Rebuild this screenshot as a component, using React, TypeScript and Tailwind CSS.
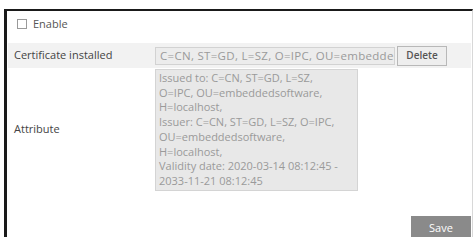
export default function App() {
  const attr = [
    "Issued to: C=CN, ST=GD, L=SZ,",
    "O=IPC, OU=embeddedsoftware,",
    "H=localhost,",
    "Issuer: C=CN, ST=GD, L=SZ, O=IPC,",
    "OU=embeddedsoftware,",
    "H=localhost,",
    "Validity date: 2020-03-14 08:12:45 -",
    "2033-11-21 08:12:45",
  ];

  return (
    <div
      className="w-[473px] h-[237px] overflow-hidden bg-white pt-[9px] pl-[4px]"
      style={{ fontFamily: '"Open Sans", "Noto Sans", sans-serif' }}
    >
      <div className="h-[240px] border-t-2 border-l-[3px] border-t-[#1a1a1a] border-l-[#1a1a1a] border-r border-r-[#d8d8d8] flex flex-col">
        {/* Enable */}
        <div className="flex items-center gap-[6px] pl-[10px] pt-[5px] h-[21px]">
          <span className="w-[10px] h-[10px] border border-[#9a9a9a] bg-white" />
          <span className="text-[11px] text-[#555]">Enable</span>
        </div>

        {/* Certificate installed */}
        <div className="mt-[11px] ml-[1px] mr-[1px] h-[25px] bg-[#f2f2f2] flex items-center">
          <div className="w-[147px] pl-[6px] text-[11px] text-[#444]">Certificate installed</div>
          <input
            readOnly
            value="C=CN, ST=GD, L=SZ, O=IPC, OU=embeddedsoftware"
            className="w-[240px] h-[18px] border border-[#d2d2d2] bg-[#ececec] pl-[4px] outline-none text-[11.5px] tracking-[0.3px] text-[#9a9a9a]"
            style={{ fontFamily: '"Open Sans", "Noto Sans", sans-serif' }}
          />
          <button className="ml-[2px] w-[50px] h-[20px] border border-[#b8b8b8] bg-[#eeeeee] text-[10px] font-semibold text-[#555]">
            Delete
          </button>
        </div>

        {/* Attribute */}
        <div className="ml-[1px] flex items-center">
          <div className="w-[147px] pl-[6px] text-[11px] text-[#444]">Attribute</div>
          <div className="w-[203px] h-[122px] mt-[1px] border border-[#d4d4d4] bg-[#e8e8e8] px-[3px] pt-[1px] text-[11px] leading-[14.7px] text-[#9a9a9a]">
            {attr.map((l, i) => (
              <div key={i} className="whitespace-nowrap">{l}</div>
            ))}
          </div>
        </div>

        {/* Save */}
        <div className="flex justify-end pr-[1px] mt-[25px]">
          <button className="w-[60px] h-[24px] bg-[#8a8a8a] text-white text-[11px]">Save</button>
        </div>
      </div>
    </div>
  );
}
